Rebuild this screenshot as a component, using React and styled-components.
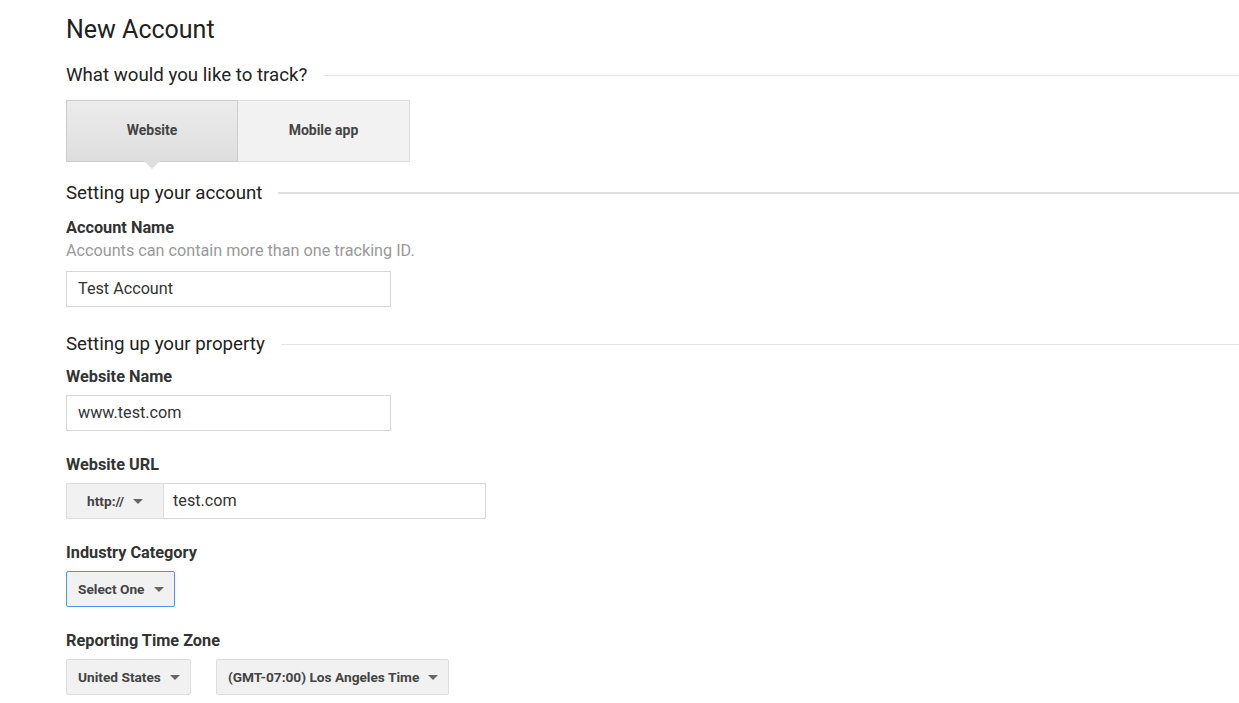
import React from "react";
import styled, { createGlobalStyle } from "styled-components";

const Global = createGlobalStyle`
  body {
    margin: 0;
    background: #fff;
    font-family: Roboto, "Liberation Sans", Arial, sans-serif;
    color: #222;
  }
`;

const Page = styled.div`
  padding: 14px 0 0 66px;
`;

const Title = styled.h1`
  margin: 0;
  font-size: 25px;
  line-height: 32px;
  font-weight: 400;
  color: #212121;
`;

const SectionHead = styled.div`
  display: flex;
  align-items: center;
  margin-top: ${(p) => p.top}px;
  font-size: 18.7px;
  line-height: 24px;
  color: #222;

  &::after {
    content: "";
    flex: 1;
    margin-left: 16px;
    height: ${(p) => (p.thick ? 2 : 1)}px;
    background: ${(p) => (p.thick ? "#e0e0e0" : "#e5e5e5")};
  }
`;

const Tabs = styled.div`
  display: flex;
  margin-top: 13px;
  width: 344px;
`;

const Tab = styled.div`
  position: relative;
  width: 172px;
  height: 62px;
  box-sizing: border-box;
  display: flex;
  align-items: center;
  justify-content: center;
  padding-bottom: 2px;
  font-size: 14px;
  font-weight: 700;
  color: #444;
  border: 1px solid ${(p) => (p.active ? "#ccc" : "#ddd")};
  background: ${(p) => (p.active ? "linear-gradient(#ececec, #dedede)" : "#f2f2f2")};
  & + & {
    border-left: none;
  }

  ${(p) =>
    p.active &&
    `
    &::after {
      content: "";
      position: absolute;
      left: 50%;
      bottom: -8px;
      margin-left: -8px;
      border-left: 8px solid transparent;
      border-right: 8px solid transparent;
      border-top: 8px solid #dedede;
    }
  `}
`;

const Field = styled.div`
  margin-top: ${(p) => p.top}px;
`;

const Label = styled.div`
  font-size: 16.3px;
  line-height: 20px;
  font-weight: 700;
  color: #333;
  margin-bottom: 8px;
`;

const Hint = styled.div`
  font-size: 16.2px;
  line-height: 20px;
  color: #999;
  margin: -5px 0 10px;
`;

const Input = styled.div`
  box-sizing: border-box;
  width: ${(p) => p.w}px;
  height: 36px;
  border: 1px solid #d6d6d6;
  border-left-width: ${(p) => (p.joined ? 0 : 1)}px;
  display: flex;
  align-items: center;
  padding-left: ${(p) => p.pad || 11}px;
  padding-bottom: 1px;
  font-size: 16.2px;
  color: #333;
`;

const Group = styled.div`
  display: flex;
`;

const SelectBtn = styled.div`
  box-sizing: border-box;
  height: 36px;
  width: ${(p) => (p.w ? `${p.w}px` : "auto")};
  display: inline-flex;
  align-items: center;
  padding: 0 10px 0 ${(p) => p.pl || 11}px;
  background: #f1f1f1;
  border: 1px solid ${(p) => (p.focus ? "#4d90fe" : "#ddd")};
  border-radius: ${(p) => (p.flat ? 0 : 2)}px;
  font-size: 13.7px;
  font-weight: 700;
  color: #444;
  white-space: nowrap;

  &::after {
    content: "";
    margin-left: 9px;
    border-left: 5px solid transparent;
    border-right: 5px solid transparent;
    border-top: 5px solid #666;
    margin-top: 1px;
  }
`;

const Row = styled.div`
  display: flex;
  gap: 25px;
`;

export default function App() {
  return (
    <>
      <Global />
      <Page>
        <Title>New Account</Title>
        <SectionHead top={17}>What would you like to track?</SectionHead>
        <Tabs>
          <Tab active>Website</Tab>
          <Tab>Mobile app</Tab>
        </Tabs>
        <SectionHead top={19} thick>
          Setting up your account
        </SectionHead>
        <Field top={13}>
          <Label>Account Name</Label>
          <Hint>Accounts can contain more than one tracking ID.</Hint>
          <Input w={325}>Test Account</Input>
        </Field>
        <SectionHead top={25}>Setting up your property</SectionHead>
        <Field top={11}>
          <Label>Website Name</Label>
          <Input w={325}>www.test.com</Input>
        </Field>
        <Field top={24}>
          <Label>Website URL</Label>
          <Group>
            <SelectBtn w={98} pl={20} flat>
              http://
            </SelectBtn>
            <Input w={322} pad={9} joined>
              test.com
            </Input>
          </Group>
        </Field>
        <Field top={24}>
          <Label>Industry Category</Label>
          <SelectBtn focus>Select One</SelectBtn>
        </Field>
        <Field top={24}>
          <Label>Reporting Time Zone</Label>
          <Row>
            <SelectBtn>United States</SelectBtn>
            <SelectBtn>(GMT-07:00) Los Angeles Time</SelectBtn>
          </Row>
        </Field>
      </Page>
    </>
  );
}
